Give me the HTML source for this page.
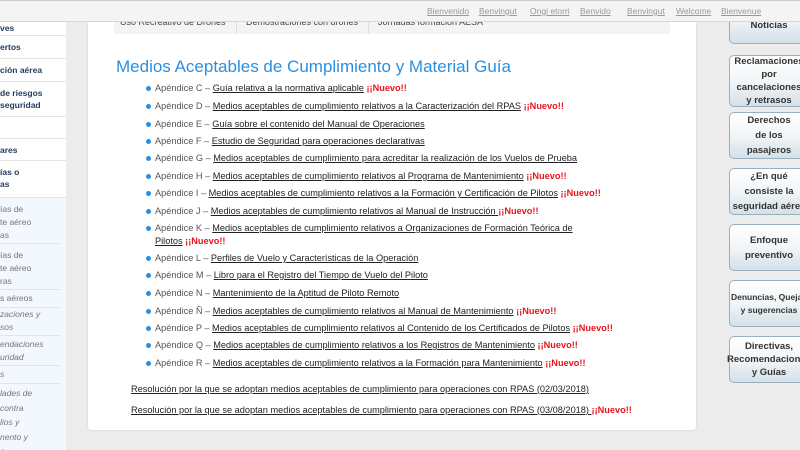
<!DOCTYPE html>
<html><head><meta charset="utf-8"><style>
*{margin:0;padding:0;box-sizing:border-box}
html,body{width:800px;height:450px;overflow:hidden}
body{background:#ececec;font-family:"Liberation Sans",sans-serif;position:relative}
.top{position:absolute;left:0;top:0;width:800px;height:22px;background:#f4f4f4;border-bottom:1px solid #d8d8d8;border-top:1px solid #ccc;z-index:5}
.top a{position:absolute;top:5px;font-size:8.5px;color:#999;text-decoration:underline}
.side{position:absolute;left:0;top:22px;width:66px;height:428px;background:#fff}
.side div{position:absolute;left:0;width:66px;font-size:8.5px;font-weight:bold;color:#1f3a5c;border-bottom:1px solid #e4e4e4;line-height:12px}
.sub{position:absolute;left:0;top:198px;width:66px;height:252px;background:#f2f8fd}
.sub div{position:absolute;left:0;width:60px;font-size:8.5px;color:#777;line-height:13px;border-bottom:1px solid #dde6ee}
.main{position:absolute;left:88px;top:0;width:608px;height:430px;background:#fff;border-radius:0 0 3px 3px;box-shadow:0 0 2px #ccc}
.tabs{position:absolute;left:26px;top:10px;height:24px;width:556px;background:#f4f4f4}
.tabs span{position:absolute;top:7px;font-size:9px;color:#444}
.tabs i{position:absolute;top:0;width:1px;height:24px;background:#ddd}
h1{position:absolute;left:28px;top:57px;font-size:17px;font-weight:normal;color:#2b8fe0;white-space:nowrap}
.li{position:absolute;left:67px;font-size:9.2px;color:#555;white-space:nowrap;line-height:13px}
.li:before{content:"";position:absolute;left:-9px;top:4px;width:5px;height:5px;border-radius:50%;background:#2b8fe0}
u{color:#222}
b{color:#e8141c}
.res{position:absolute;left:43px;font-size:9.2px;color:#222;text-decoration:underline;white-space:nowrap}
.btn{position:absolute;left:729px;width:80px;border:1px solid #9ab0bd;border-radius:5px;background:linear-gradient(#fff,#f2f6f8 50%,#d4e0e8);font-size:9.5px;font-weight:bold;color:#333;text-align:center;line-height:13px;display:flex;align-items:center;justify-content:center}
</style></head><body>
<div class="top">
<a style="left:427px">Bienvenido</a><a style="left:479px">Benvingut</a><a style="left:530px">Ongi etorri</a><a style="left:580px">Benvido</a><a style="left:627px">Benvingut</a><a style="left:676px">Welcome</a><a style="left:721px">Bienvenue</a>
</div>
<div class="side">
<div style="top:0;height:14px">ves</div>
<div style="top:14px;height:23px;padding-top:5px">ertos</div>
<div style="top:37px;height:23px;padding-top:5px">ción aérea</div>
<div style="top:60px;height:35px;padding-top:5px">de riesgos<br>seguridad</div>
<div style="top:95px;height:22px"></div>
<div style="top:117px;height:22px;padding-top:5px">ares</div>
<div style="top:139px;height:37px;padding-top:5px">ías o<br>as</div>
</div>
<div class="sub">
<div style="top:0;height:46px;padding-top:5px">ías de<br>te aéreo<br>as</div>
<div style="top:46px;height:46px;padding-top:5px">ías de<br>te aéreo<br>ras</div>
<div style="top:92px;height:18px;padding-top:2px">s aéreos</div>
<div style="top:110px;height:28px;font-style:italic">zaciones y<br>sos</div>
<div style="top:138px;height:30px;font-style:italic;padding-top:2px">endaciones<br>uridad</div>
<div style="top:168px;height:18px;font-style:italic;padding-top:2px">s</div>
<div style="top:186px;height:66px;font-style:italic;padding-top:2px;border:0;line-height:14.5px">lades de<br>contra<br>lios y<br>nento y<br>e</div>
</div>
<div class="main">
<div class="tabs"><span style="left:6px">Uso Recreativo de Drones</span><i style="left:122px"></i><span style="left:132px">Demostraciones con drones</span><i style="left:254px"></i><span style="left:264px">Jornadas formación AESA</span></div>
<h1>Medios Aceptables de Cumplimiento y Material Guía</h1>
<div class="li" style="top:82px">Apéndice C – <u>Guía relativa a la normativa aplicable</u> <b>¡¡Nuevo!!</b></div>
<div class="li" style="top:100px">Apéndice D – <u>Medios aceptables de cumplimiento relativos a la Caracterización del RPAS</u> <b>¡¡Nuevo!!</b></div>
<div class="li" style="top:118px">Apéndice E – <u>Guía sobre el contenido del Manual de Operaciones</u></div>
<div class="li" style="top:135px">Apéndice F – <u>Estudio de Seguridad para operaciones declarativas</u></div>
<div class="li" style="top:152px">Apéndice G – <u>Medios aceptables de cumplimiento para acreditar la realización de los Vuelos de Prueba</u></div>
<div class="li" style="top:170px">Apéndice H – <u>Medios aceptables de cumplimiento relativos al Programa de Mantenimiento</u> <b>¡¡Nuevo!!</b></div>
<div class="li" style="top:187px">Apéndice I – <u>Medios aceptables de cumplimiento relativos a la Formación y Certificación de Pilotos</u> <b>¡¡Nuevo!!</b></div>
<div class="li" style="top:205px">Apéndice J – <u>Medios aceptables de cumplimiento relativos al Manual de Instrucción </u> <b>¡¡Nuevo!!</b></div>
<div class="li" style="top:222px">Apéndice K – <u>Medios aceptables de cumplimiento relativos a Organizaciones de Formación Teórica de</u><br><u>Pilotos</u> <b>¡¡Nuevo!!</b></div>
<div class="li" style="top:252px">Apéndice L – <u>Perfiles de Vuelo y Características de la Operación</u></div>
<div class="li" style="top:269px">Apéndice M – <u>Libro para el Registro del Tiempo de Vuelo del Piloto</u></div>
<div class="li" style="top:287px">Apéndice N – <u>Mantenimiento de la Aptitud de Piloto Remoto</u></div>
<div class="li" style="top:305px">Apéndice Ñ – <u>Medios aceptables de cumplimiento relativos al Manual de Mantenimiento</u> <b>¡¡Nuevo!!</b></div>
<div class="li" style="top:322px">Apéndice P – <u>Medios aceptables de cumplimiento relativos al Contenido de los Certificados de Pilotos</u> <b>¡¡Nuevo!!</b></div>
<div class="li" style="top:339px">Apéndice Q – <u>Medios aceptables de cumplimiento relativos a los Registros de Mantenimiento</u> <b>¡¡Nuevo!!</b></div>
<div class="li" style="top:357px">Apéndice R – <u>Medios aceptables de cumplimiento relativos a la Formación para Mantenimiento</u> <b>¡¡Nuevo!!</b></div>
<div class="res" style="top:384px">Resolución por la que se adoptan medios aceptables de cumplimiento para operaciones con RPAS (02/03/2018)</div>
<div class="res" style="top:405px">Resolución por la que se adoptan medios aceptables de cumplimiento para operaciones con RPAS (03/08/2018) <b style="text-decoration:none;display:inline-block">¡¡Nuevo!!</b></div>
</div>
<div class="btn" style="top:-8px;height:52px;padding-top:14px">Noticias</div>
<div class="btn" style="top:55px;height:52px">Reclamaciones<br>por<br>cancelaciones<br>y retrasos</div>
<div class="btn" style="top:112px;height:47px;line-height:15px">Derechos<br>de los<br>pasajeros</div>
<div class="btn" style="top:168px;height:47px;line-height:15px">¿En qué<br>consiste la<br>seguridad aérea</div>
<div class="btn" style="top:224px;height:47px;line-height:15px">Enfoque<br>preventivo</div>
<div class="btn" style="top:280px;height:47px;font-size:8.5px">Denuncias, Quejas<br>y sugerencias</div>
<div class="btn" style="top:336px;height:47px">Directivas,<br>Recomendaciones<br>y Guías</div>
</body></html>
